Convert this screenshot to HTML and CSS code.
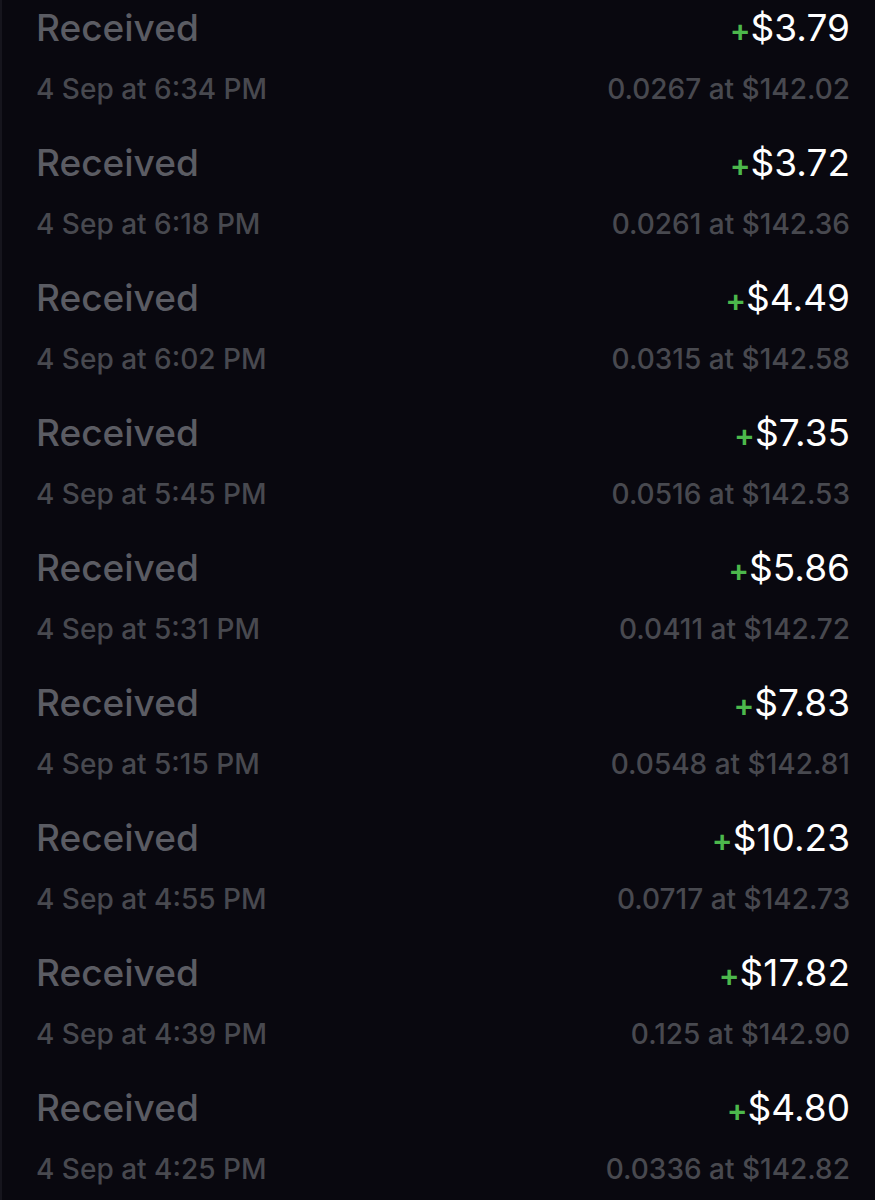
FILE: index.html
```html
<!DOCTYPE html>
<html lang="en">
  <head>
    <meta charset="UTF-8" />
    <meta name="viewport" content="width=device-width, initial-scale=1.0" />
    <title>Activity</title>
    <link rel="stylesheet" href="styles.css">
  </head>
  <body>
    <ul class="activity">
      <li class="tx">
        <div class="line">
          <span class="label">Received</span>
          <span class="amount"><span class="plus">+</span>$3.79</span>
        </div>
        <div class="line sub">
          <span>4 Sep at 6:34 PM</span>
          <span>0.0267 at $142.02</span>
        </div>
      </li>
      <li class="tx">
        <div class="line">
          <span class="label">Received</span>
          <span class="amount"><span class="plus">+</span>$3.72</span>
        </div>
        <div class="line sub">
          <span>4 Sep at 6:18 PM</span>
          <span>0.0261 at $142.36</span>
        </div>
      </li>
      <li class="tx">
        <div class="line">
          <span class="label">Received</span>
          <span class="amount"><span class="plus">+</span>$4.49</span>
        </div>
        <div class="line sub">
          <span>4 Sep at 6:02 PM</span>
          <span>0.0315 at $142.58</span>
        </div>
      </li>
      <li class="tx">
        <div class="line">
          <span class="label">Received</span>
          <span class="amount"><span class="plus">+</span>$7.35</span>
        </div>
        <div class="line sub">
          <span>4 Sep at 5:45 PM</span>
          <span>0.0516 at $142.53</span>
        </div>
      </li>
      <li class="tx">
        <div class="line">
          <span class="label">Received</span>
          <span class="amount"><span class="plus">+</span>$5.86</span>
        </div>
        <div class="line sub">
          <span>4 Sep at 5:31 PM</span>
          <span>0.0411 at $142.72</span>
        </div>
      </li>
      <li class="tx">
        <div class="line">
          <span class="label">Received</span>
          <span class="amount"><span class="plus">+</span>$7.83</span>
        </div>
        <div class="line sub">
          <span>4 Sep at 5:15 PM</span>
          <span>0.0548 at $142.81</span>
        </div>
      </li>
      <li class="tx">
        <div class="line">
          <span class="label">Received</span>
          <span class="amount"><span class="plus">+</span>$10.23</span>
        </div>
        <div class="line sub">
          <span>4 Sep at 4:55 PM</span>
          <span>0.0717 at $142.73</span>
        </div>
      </li>
      <li class="tx">
        <div class="line">
          <span class="label">Received</span>
          <span class="amount"><span class="plus">+</span>$17.82</span>
        </div>
        <div class="line sub">
          <span>4 Sep at 4:39 PM</span>
          <span>0.125 at $142.90</span>
        </div>
      </li>
      <li class="tx">
        <div class="line">
          <span class="label">Received</span>
          <span class="amount"><span class="plus">+</span>$4.80</span>
        </div>
        <div class="line sub">
          <span>4 Sep at 4:25 PM</span>
          <span>0.0336 at $142.82</span>
        </div>
      </li>
    </ul>
  </body>
</html>
```

FILE: styles.css
```css
body {
  margin: 0;
  background-color: #09080f;
  font-family: Inter, "Noto Sans", sans-serif;
}
.activity {
  list-style-type: none;
  margin: 0;
  padding: 0;
  height: 1200px;
  overflow: hidden;
  border-left: 2px solid #16151d;
}
.tx {
  height: 135px;
  box-sizing: border-box;
  padding: 8px 25px 0 34px;
}
.line {
  display: flex;
  justify-content: space-between;
  align-items: baseline;
  height: 40px;
  font-size: 37px;
  font-weight: 500;
  line-height: 40px;
}
.label {
  color: #5b5c63;
}
.amount {
  color: #ffffff;
  font-weight: 400;
}
.plus {
  color: #4cb84c;
  font-size: 31px;
  line-height: 0;
  font-weight: 600;
}
.line.sub {
  height: 36px;
  margin-top: 23px;
  font-size: 28px;
  line-height: 36px;
  color: #48494f;
}
```
